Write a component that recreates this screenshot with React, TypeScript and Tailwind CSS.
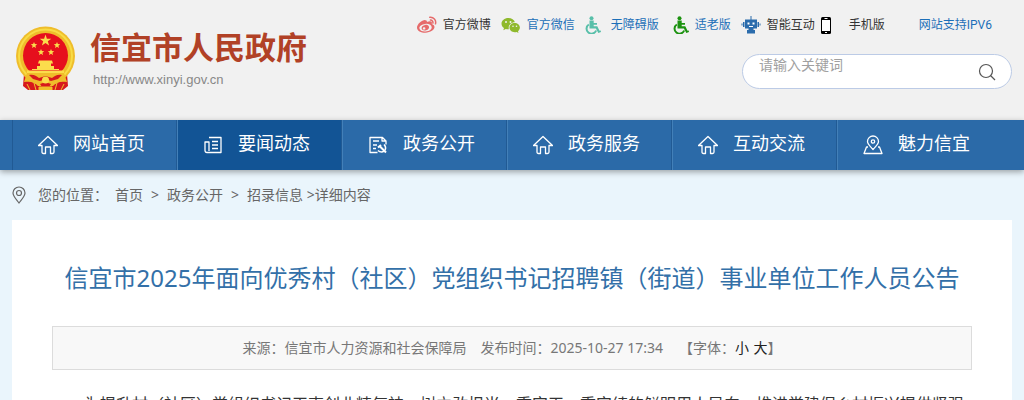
import type { ReactNode } from 'react'

const TOP_LINKS = [
  { label: '官方微博', icon: 'weibo', color: 'text-[#333]', width: 'w-21', gap: 'gap-1.5' },
  { label: '官方微信', icon: 'wechat', color: 'text-[#1c6fb8]', width: 'w-21', gap: 'gap-1.5' },
  { label: '无障碍版', icon: 'access', color: 'text-[#1c6fb8]', width: 'w-22', gap: 'gap-2.5' },
  { label: '适老版', icon: 'elder', color: 'text-[#1c6fb8]', width: 'w-17', gap: 'gap-1.5' },
  { label: '智能互动', icon: 'robot', color: 'text-[#333]', width: 'w-20', gap: 'gap-1.5' },
  { label: '手机版', icon: 'phone', color: 'text-[#333]', width: 'w-[98px]', gap: 'gap-2.5' },
]

const NAV = [
  { label: '网站首页', icon: 'home' },
  { label: '要闻动态', icon: 'news', active: true },
  { label: '政务公开', icon: 'open' },
  { label: '政务服务', icon: 'home' },
  { label: '互动交流', icon: 'home' },
  { label: '魅力信宜', icon: 'place' },
]

const wheelchair = (
  <>
    <circle cx="6.5" cy="2.2" r="2" />
    <path d="M4.5 4.5h4.200V7H12v1.800H8.700v1.400h3.600l2.200 4.600 1.200-.3.300 1.500-2.700 1.100-2.400-4.600H4.500z" />
    <path d="M3.800 8.500a5 5 0 1 0 7.400 6" fill="none" stroke="currentColor" strokeWidth="2" />
  </>
)

const TOP_ICONS: Record<string, ReactNode> = {
  weibo: (
    <svg viewBox="0 0 20 18" className="w-5 h-[18px] shrink-0" fill="none" aria-hidden="true">
      <path
        fill="#e66b6b"
        fillRule="evenodd"
        d="M8.4 4.2C6.2 3.3 0 7.7 0 11.7c0 3 3.9 5 8.3 5 5.3 0 9.2-2.9 9.2-5.6 0-1.7-1.4-2.7-2.7-3.1.8-2.4-1.1-3.5-5-1.9.5-1.1-.1-1.7-1.4-1.9zM8.3 7.900c3.600-.4 6.200 1.100 6.400 3.300.2 2.200-2.500 4-5.900 4.300-3.500.3-6.200-1.100-6.400-3.300-.2-2.200 2.400-4 5.900-4.300z"
      />
      <path fill="#e66b6b" fillRule="evenodd" d="M8.2 8.900c-2.300.2-4 1.900-3.600 3.700.4 1.700 2.500 2.400 4.600 1.700 2.100-.6 3.300-2.300 2.700-3.800-.5-1.200-2-1.800-3.700-1.600zM7.100 11.200a1.300 1.200 0 1 1 0 2.400 1.300 1.200 0 0 1 0-2.400z" />
      <path d="M12.800 1.300a5.200 5.200 0 0 1 5.700 6.500M13.400 4.100a2.500 2.500 0 0 1 2.500 3" stroke="#e66b6b" strokeWidth="1.500" strokeLinecap="round" />
    </svg>
  ),
  wechat: (
    <svg viewBox="0 0 20 18" className="w-5 h-[18px] shrink-0" fill="#8fb92c" aria-hidden="true">
      <path d="M7.3 2C3.5 2 .5 4.500.5 7.700c0 1.800 1 3.300 2.500 4.400l-.7 2.200 2.500-1.400c.8.3 1.600.4 2.500.4h.6c-1.100-4 2.200-7.200 6-7.100C13.300 3.800 10.600 2 7.300 2z" />
      <path d="M18.900 11.500c0-2.600-2.500-4.600-5.200-4.600-2.900 0-5.200 2-5.200 4.600s2.300 4.700 5.200 4.700c.6 0 1.300-.2 1.900-.3l1.900 1-.5-1.700c1.100-.9 1.900-2.200 1.900-3.700z" />
      <g fill="#f1f1f1">
        <circle cx="5" cy="6" r="1" />
        <circle cx="9.5" cy="6" r="1" />
        <circle cx="12" cy="10.2" r=".8" />
        <circle cx="15.5" cy="10.2" r=".8" />
      </g>
    </svg>
  ),
  access: (
    <svg viewBox="0 0 16 18" className="w-4 h-[18px] shrink-0 text-[#58bfa9]" fill="currentColor" aria-hidden="true">{wheelchair}</svg>
  ),
  elder: (
    <svg viewBox="0 0 16 18" className="w-4 h-[18px] shrink-0 text-[#1c9210]" fill="currentColor" aria-hidden="true">{wheelchair}</svg>
  ),
  robot: (
    <svg viewBox="0 0 20 18" className="w-5 h-[18px] shrink-0" fill="#2b6cac" aria-hidden="true">
      <path d="M9.5 0h1v4h-1zM4 3.500h12v9H4zM2 6h1.500v5H2zM16.500 6H18v5h-1.500zM.5 7.500h1v2h-1zM18.500 7.500h1v2h-1zM7.500 12.500h5V14h-5zM6 14h8v3.500H6z" />
      <path d="M6.500 6.500h2v2h-2zM11.500 6.500h2v2h-2zM8 10h4v1H8z" fill="#fff" />
    </svg>
  ),
  phone: (
    <svg viewBox="0 0 18 18" className="w-[18px] h-[18px] shrink-0" aria-hidden="true">
      <rect x="0" y="1" width="10" height="17" rx="1.5" fill="#000" />
      <path d="M1 4h8v11H1z" fill="#fff" />
      <path d="M3.500 2.500h3M4 16.500h2" stroke="#fff" strokeWidth="1" />
    </svg>
  ),
}

const NAV_ICONS: Record<string, ReactNode> = {
  home: <path d="M.5 10.500 10 1.500l9.500 9H16V17q0 1.500-1.500 1.500h-2V12h-5v6.500h-2Q4 18.500 4 17v-6.500z" />,
  news: <path d="M6 2.500h12v15H4Q2 17.500 2 15.500V7h4v9M9 6.500h6M9 10h6M9 13.500h6" />,
  open: (
    <>
      <path d="M9.500 17.500H2v-15h12.500L18 6v3.500M14 2.500V6h4M5 6h6M5 10h4M5 13.500h3" />
      <path d="m10 12.500 3-2.500M12 11.500l6 6" strokeWidth="2" />
      <path d="M16 9.500c3 3 1.500 7.500-2.500 7.500-1.500 0-2.500-.5-3.500-1.500" strokeWidth="1.500" />
    </>
  ),
  place: (
    <>
      <path d="M10 14.500C7 11 4.500 9 4.500 6.500a5.500 5.500 0 0 1 11 0c0 2.500-2.500 4.500-5.500 8z" />
      <circle cx="10" cy="6.5" r="1.7" />
      <path d="M5 12H3.500l-2.500 6.500h18l-2.500-6.500H15" />
    </>
  ),
}

function Emblem() {
  return (
    <svg viewBox="0 0 60 64" className="w-15 h-16 shrink-0" role="img" aria-label="国徽">
      <path d="M8 48 7 60l5 4h35l5-4-1-12z" fill="#d7191c" />
      <circle cx="29.5" cy="30" r="29.5" fill="#efbd2b" />
      <circle cx="29.5" cy="30" r="26.5" fill="none" stroke="#f8dc45" strokeWidth="2" />
      <circle cx="29.5" cy="29.5" r="22.5" fill="#e60f1d" />
      <g fill="#fbdc4c">
        <path d="m29.500 8.500 1.400 4.200h4.400l-3.500 2.600 1.300 4.200-3.600-2.600-3.600 2.600 1.300-4.200-3.500-2.600h4.400z" />
        <path d="m18 16 .9 2.100 2.300.2-1.800 1.500.6 2.200-2-1.200-2 1.200.6-2.200-1.800-1.500 2.300-.2zM41 16l.9 2.100 2.300.2-1.800 1.500.6 2.200-2-1.200-2 1.200.6-2.200-1.800-1.500 2.300-.2zM25 23l.9 2.100 2.300.2-1.800 1.500.6 2.200-2-1.200-2 1.200.6-2.200-1.800-1.500 2.300-.2zM35 23l.9 2.100 2.300.2-1.800 1.500.6 2.200-2-1.200-2 1.200.6-2.200-1.800-1.500 2.300-.2z" />
        <path d="M23 34.500h13l1 3h-2V40h3v3h5v1H16v-1h5v-3h3v-2.500h-2zM11 44.500h37V47H11z" />
      </g>
      <path d="M11 47h37l3 9c-6-1-11 0-14 4H22c-3-4-8-5-14-4z" fill="#efbd2b" />
      <path d="M13 49c5-1 7 1 10 3l6.500-2 6.500 2c3-2 5-4 10-3l-4 4-7 2-5.500-2-5.500 2-7-2zM24 58l5.500-2 5.500 2-2 3h-7z" fill="#d7191c" />
      <circle cx="29.5" cy="54" r="3.5" fill="#fbdc4c" />
      <path d="m11 58 3 6M48 58l-3 6M18 57l2 7M41 57l-2 7M23 61h13v3H23z" stroke="#f2c22c" strokeWidth="1" fill="#efbd2b" />
    </svg>
  )
}

export default function App() {
  return (
    <div className="bg-[#eaf5fc] font-['Noto_Sans','Noto_Sans_CJK_SC',sans-serif]">
      <header className="bg-[#f1f1f1] h-30 pl-4 pr-3 flex justify-between">
        <a href="/" className="flex items-start gap-3.5 pt-[26px]">
          <Emblem />
          <div>
            <h1 className="text-[31px] leading-[42px] font-bold text-[#b14126]">信宜市人民政府</h1>
            <p className="pl-[3px] text-[13px] leading-6 text-[#888] font-['Liberation_Sans',sans-serif]">http://www.xinyi.gov.cn</p>
          </div>
        </a>

        <div className="flex flex-col items-end">
          <div className="flex items-center pt-[13px] pr-5 text-xs leading-6 font-['Roboto','Noto_Sans_CJK_SC',sans-serif] whitespace-nowrap">
            {TOP_LINKS.map((link) => (
              <a key={link.label} href="#" className={`flex items-center ${link.width} ${link.gap} ${link.color}`}>
                {TOP_ICONS[link.icon]}
                {link.label}
              </a>
            ))}
            <a href="#" className="text-[#1c6fb8]">网站支持IPV6</a>
          </div>

          <form className="flex w-[270px] h-[35px] mt-[17px] rounded-full border border-[#bccbe6] bg-white pl-4 pr-3.5">
            <input
              type="text"
              aria-label="请输入关键词"
              placeholder="请输入关键词"
              className="flex-1 min-w-0 h-5 text-sm outline-none placeholder:text-[#a0a0a0]"
            />
            <button type="submit" aria-label="搜索">
              <svg viewBox="0 0 20 20" className="w-5 h-5" fill="none" stroke="#555" strokeWidth="1.2" aria-hidden="true">
                <circle cx="9" cy="9" r="6.5" />
                <path d="m13.500 13.500 4.500 4.500" />
              </svg>
            </button>
          </form>
        </div>
      </header>

      <nav className="relative bg-[#2b6aa8] h-[50px] px-3 shadow-[0_2px_6px_rgba(0,0,0,0.35)]">
        <ul className="flex h-full">
          {NAV.map((item) => (
            <li
              key={item.label}
              className="w-[165px] border-l border-r border-l-[#4380b8] border-r-[#215a94] first:border-l-[#215a94] last:border-r-0"
            >
              <a
                href="#"
                className={`flex h-full items-start pl-[25px] pt-2.5 gap-[15px] text-lg leading-[26px] text-white ${
                  item.active ? 'bg-[#125495]' : ''
                }`}
              >
                <svg viewBox="0 0 20 20" className="w-5 h-5 mt-[5px] shrink-0" fill="none" stroke="currentColor" strokeWidth="1.3" strokeLinejoin="round" aria-hidden="true">
                  {NAV_ICONS[item.icon]}
                </svg>
                {item.label}
              </a>
            </li>
          ))}
        </ul>
      </nav>

      <div className="flex items-center h-[50px] px-3 text-sm text-[#666] whitespace-pre">
        <svg viewBox="0 0 14 18" className="w-3.5 h-[18px] mr-3" fill="none" stroke="#666" strokeWidth="1.2" aria-hidden="true">
          <path d="M7 17C4 13 1 10 1 7a6 6 0 0 1 12 0c0 3-3 6-6 10z" />
          <circle cx="7" cy="7" r="2.5" />
        </svg>
        <span className="mr-[7px]">您的位置：</span>
        <a href="#">首页</a>
        <span className="mx-2">&gt;</span>
        <a href="#">政务公开</a>
        <span className="mx-2">&gt;</span>
        <a href="#">招录信息</a>
        <span> &gt;详细内容</span>
      </div>

      <main className="mx-3 bg-white px-10 pt-9">
        <h2 className="text-center text-2xl leading-11 text-[#3370a8]">
          信宜市2025年面向优秀村（社区）党组织书记招聘镇（街道）事业单位工作人员公告
        </h2>
        <div className="mt-[26px] flex items-center justify-center h-11 border border-[#dcdcdc] bg-[#f8f8f8] text-sm text-[#777]">
          <span className="mr-3.5">来源：信宜市人力资源和社会保障局</span>
          <span className="mr-4">发布时间：2025-10-27 17:34</span>
          <span>
            【字体：<button type="button" className="mr-px text-[#222]">小</button>{' '}
            <button type="button" className="text-[#222]">大</button>】
          </span>
        </div>
        <p className="mt-5 indent-8 text-base leading-7 text-[#333]">
          为提升村（社区）党组织书记干事创业精气神，树立敢担当、重实干、重实绩的鲜明用人导向，推进党建促乡村振兴提供坚强
        </p>
      </main>
    </div>
  )
}
